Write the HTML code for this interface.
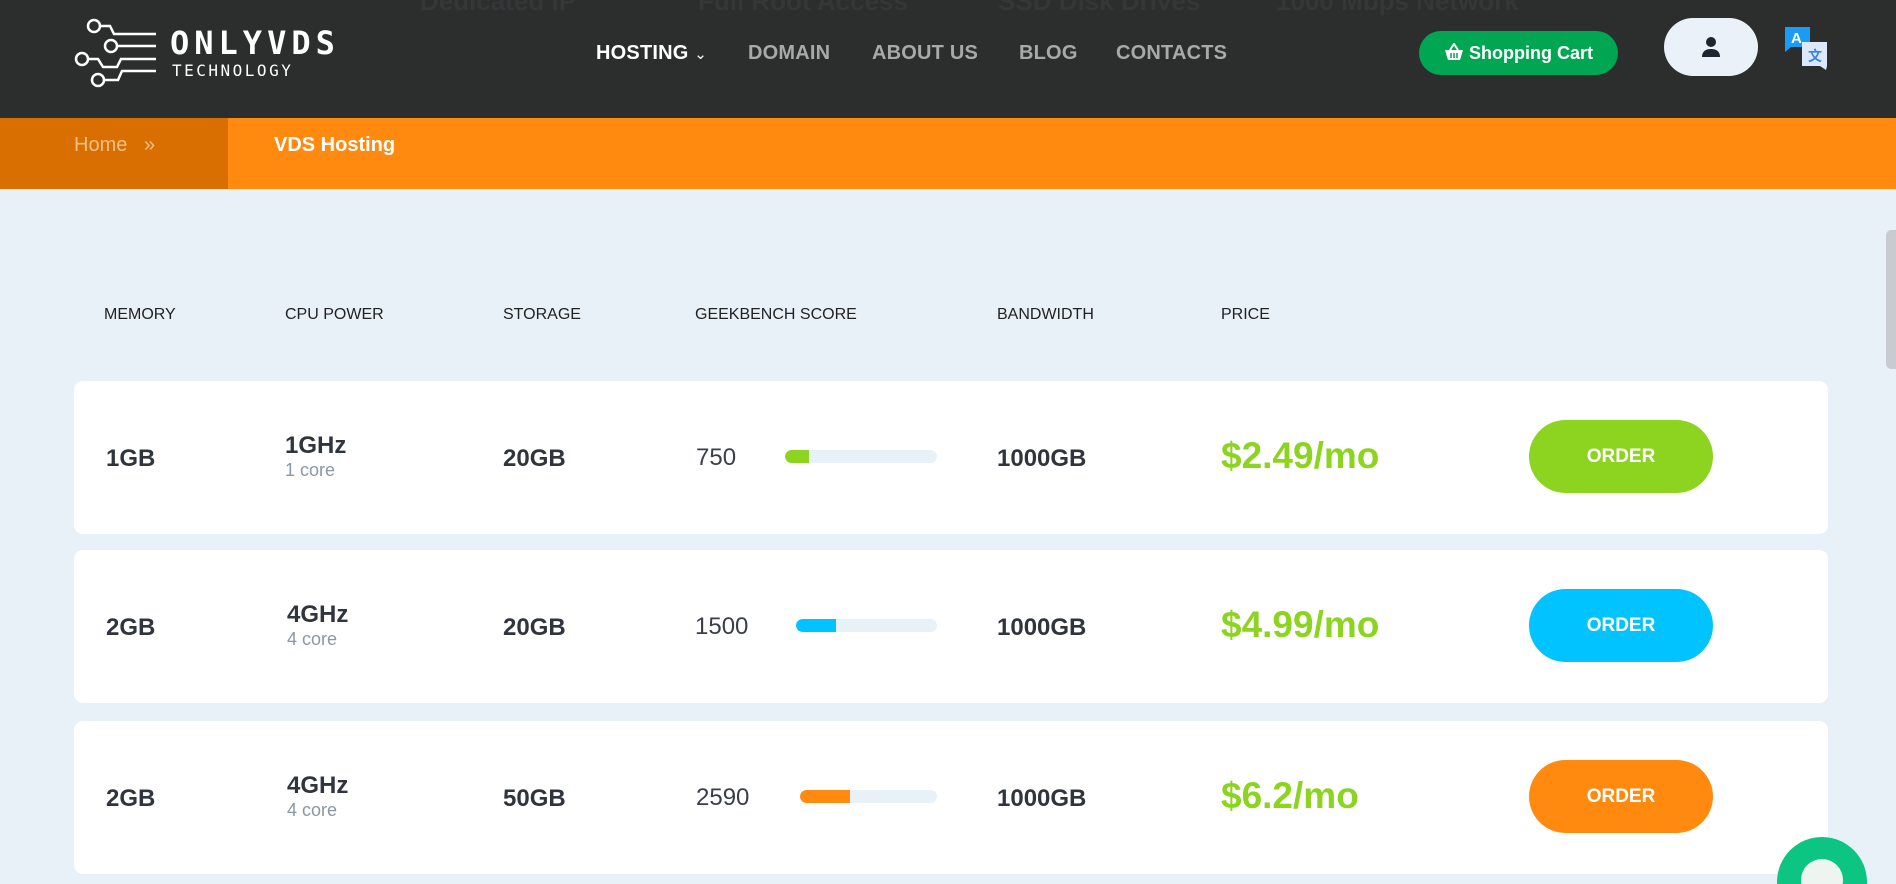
<!DOCTYPE html>
<html><head><meta charset="utf-8"><style>
*{margin:0;padding:0;box-sizing:border-box}
html,body{width:1896px;height:884px;overflow:hidden}
body{background:#e9f1f8;font-family:"Liberation Sans",sans-serif;color:#2f3540}
#wrap{position:relative;width:1896px;height:884px;overflow:hidden}
.hdr{position:absolute;left:0;top:0;width:1896px;height:118px;background:#2c2d2d}
.ghost{position:absolute;top:-14px;font-size:26px;color:#353637;font-weight:bold}
.nav{position:absolute;top:42px;font-size:20px;font-weight:bold;color:#a9a9a9;letter-spacing:.2px}
.cart{position:absolute;left:1419px;top:31px;width:199px;height:44px;border-radius:22px;background:#00a651;color:#fff;font-size:18px;font-weight:bold;line-height:44px;text-align:center}
.user{position:absolute;left:1664px;top:18px;width:94px;height:58px;border-radius:29px;background:#eaf1f8}
.crumb{position:absolute;left:0;top:118px;width:1896px;height:71px;background:#ff8a0f}
.crumb .dk{position:absolute;left:0;top:0;width:228px;height:71px;background:#d96f00}
.th{position:absolute;top:306px;font-size:16px;color:#222}
.card{position:absolute;left:74px;width:1754px;height:153px;background:#fff;border-radius:9px}
.v{position:absolute;font-size:24px;font-weight:bold;color:#30353d}
.core{position:absolute;font-size:18px;color:#8a97a6}
.score{position:absolute;font-size:24px;color:#3a3f47}
.bar{position:absolute;height:13px;border-radius:7px;background:#e9f1f8;overflow:hidden}
.bar i{position:absolute;left:0;top:0;height:13px;border-radius:7px 0 0 7px}
.price{position:absolute;font-size:37px;color:#8cd420;font-weight:bold}
.btn{position:absolute;left:1455px;width:184px;height:73px;border-radius:37px;color:#fff;font-size:19px;font-weight:bold;text-align:center;line-height:73px}
</style></head><body><div id="wrap">
<div class="hdr">
<div class="ghost" style="left:420px">Dedicated IP</div>
<div class="ghost" style="left:698px">Full Root Access</div>
<div class="ghost" style="left:998px">SSD Disk Drives</div>
<div class="ghost" style="left:1276px">1000 Mbps Network</div>
<svg style="position:absolute;left:74px;top:16px" width="90" height="76" viewBox="0 0 90 76" fill="none" stroke="#fff" stroke-width="2.5">
<circle cx="20" cy="10" r="6"/><path d="M26 10h10l4 8h42"/>
<circle cx="37" cy="30" r="6"/><path d="M43 30h39"/>
<circle cx="8" cy="43" r="6"/><path d="M14 43h10l5 8h14l4-8h35"/>
<circle cx="24" cy="64" r="6"/><path d="M30 64h14l4-9h34"/>
</svg>
<div style="position:absolute;left:170px;top:26px;font-size:32px;font-weight:bold;color:#fff;letter-spacing:5px;line-height:34px;font-family:'DejaVu Sans Mono','Liberation Mono',monospace">ONLYVDS</div>
<div style="position:absolute;left:172px;top:61px;font-size:16px;color:#fff;letter-spacing:2.5px;font-family:'DejaVu Sans Mono','Liberation Mono',monospace">TECHNOLOGY</div>
<div class="nav" style="left:596px;color:#fff">HOSTING <span style="font-weight:normal;font-size:15px">&#8964;</span></div>
<div class="nav" style="left:748px">DOMAIN</div>
<div class="nav" style="left:872px">ABOUT US</div>
<div class="nav" style="left:1019px">BLOG</div>
<div class="nav" style="left:1116px">CONTACTS</div>
<div class="cart"><svg width="20" height="18" viewBox="0 0 20 18" style="vertical-align:-2px"><path d="M6 7L10 1L14 7" stroke="#fff" stroke-width="2" fill="none"/><path d="M1 7h18l-3 10H4z" fill="#fff"/><path d="M7 10v5M10 10v5M13 10v5" stroke="#00a651" stroke-width="1.5"/></svg> Shopping Cart</div>
<div class="user"><svg style="position:absolute;left:37px;top:18px" width="20" height="22" viewBox="0 0 20 22"><circle cx="10" cy="6" r="5" fill="#1f2530"/><path d="M1 21c0-6 4-8 9-8s9 2 9 8z" fill="#1f2530"/></svg></div>
<svg style="position:absolute;left:1783px;top:25px" width="46" height="46" viewBox="0 0 46 46"><path d="M2 2h25v20H8l-6 5z" fill="#1a9bf5"/><text x="8" y="18" font-size="15" font-weight="bold" fill="#fff" font-family="Liberation Sans">A</text><path d="M19 17h25v24l-1 4-6-4H19z" fill="#dbe9fb"/><text x="25" y="36" font-size="14" font-weight="bold" fill="#3a7ff0" font-family="Noto Sans CJK SC,sans-serif">文</text></svg>
</div>
<div class="crumb"><div class="dk"></div>
<div style="position:absolute;left:74px;top:16px;font-size:20px;color:#f3c08a">Home &nbsp;&nbsp;»</div>
<div style="position:absolute;left:274px;top:16px;font-size:20px;color:#fff;font-weight:bold">VDS Hosting</div>
</div>
<div style="position:absolute;left:1886px;top:230px;width:10px;height:139px;background:#c8ccd1;border-radius:5px 0 0 5px"></div>
<div class="th" style="left:104px">MEMORY</div>
<div class="th" style="left:285px">CPU POWER</div>
<div class="th" style="left:503px">STORAGE</div>
<div class="th" style="left:695px">GEEKBENCH SCORE</div>
<div class="th" style="left:997px">BANDWIDTH</div>
<div class="th" style="left:1221px">PRICE</div>

<div class="card" style="top:381px">
<div class="v" style="left:32px;top:64px">1GB</div>
<div class="v" style="left:211px;top:51px">1GHz</div><div class="core" style="left:211px;top:79px">1 core</div>
<div class="v" style="left:429px;top:64px">20GB</div>
<div class="score" style="left:622px;top:63px">750</div>
<div class="bar" style="left:711px;top:69px;width:152px"><i style="width:24px;background:#8cd420"></i></div>
<div class="v" style="left:923px;top:64px">1000GB</div>
<div class="price" style="left:1147px;top:54px">$2.49/mo</div>
<div class="btn" style="top:39px;background:#8cd420">ORDER</div>
</div>
<div class="card" style="top:550px">
<div class="v" style="left:32px;top:64px">2GB</div>
<div class="v" style="left:213px;top:51px">4GHz</div><div class="core" style="left:213px;top:79px">4 core</div>
<div class="v" style="left:429px;top:64px">20GB</div>
<div class="score" style="left:621px;top:63px">1500</div>
<div class="bar" style="left:722px;top:69px;width:141px"><i style="width:40px;background:#00c3ff"></i></div>
<div class="v" style="left:923px;top:64px">1000GB</div>
<div class="price" style="left:1147px;top:54px">$4.99/mo</div>
<div class="btn" style="top:39px;background:#00c3ff">ORDER</div>
</div>
<div class="card" style="top:721px">
<div class="v" style="left:32px;top:64px">2GB</div>
<div class="v" style="left:213px;top:51px">4GHz</div><div class="core" style="left:213px;top:79px">4 core</div>
<div class="v" style="left:429px;top:64px">50GB</div>
<div class="score" style="left:622px;top:63px">2590</div>
<div class="bar" style="left:726px;top:69px;width:137px"><i style="width:50px;background:#ff8a0f"></i></div>
<div class="v" style="left:923px;top:64px">1000GB</div>
<div class="price" style="left:1147px;top:54px">$6.2/mo</div>
<div class="btn" style="top:39px;background:#ff8a0f">ORDER</div>
</div>
<div style="position:absolute;left:1777px;top:837px;width:90px;height:90px;border-radius:50%;background:#0cc582"></div>
<div style="position:absolute;left:1801px;top:859px;width:42px;height:42px;border-radius:50%;background:#eef5f0"></div>
</div></body></html>
